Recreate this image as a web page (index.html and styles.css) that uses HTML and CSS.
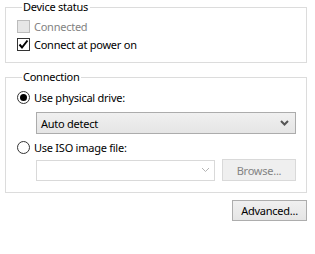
FILE: index.html
```html
<!DOCTYPE html>
<html lang="en">
<head>
    <meta charset="UTF-8">
    <meta name="viewport" content="width=device-width, initial-scale=1.0">
    <title>CD/DVD settings</title>
    <link rel="stylesheet" href="styles.css">
</head>
<body>
    <div class="settings">
        <fieldset class="group group-status">
            <legend>Device status</legend>
            <div class="option disabled">
                <span class="check"></span>
                <span class="label">Connected</span>
            </div>
            <div class="option">
                <span class="check checked">
                    <svg width="11" height="11" viewBox="0 0 11 11"><path d="M1.5 5.5 L4 8.5 L9.5 1.5" fill="none" stroke="#000" stroke-width="2"/></svg>
                </span>
                <span class="label">Connect at power on</span>
            </div>
        </fieldset>

        <fieldset class="group group-connection">
            <legend>Connection</legend>
            <div class="option">
                <span class="radio selected"></span>
                <span class="label">Use physical drive:</span>
            </div>
            <div class="select">
                <span>Auto detect</span>
                <svg width="9" height="6" viewBox="0 0 9 6"><path d="M1 1 L4.5 4.5 L8 1" fill="none" stroke="#555" stroke-width="2"/></svg>
            </div>
            <div class="option option-iso">
                <span class="radio"></span>
                <span class="label">Use ISO image file:</span>
            </div>
            <div class="file-row">
                <div class="combo">
                    <svg width="9" height="6" viewBox="0 0 9 6"><path d="M1 1 L4.5 4.5 L8 1" fill="none" stroke="#b4b4b4" stroke-width="1"/></svg>
                </div>
                <button class="btn" disabled>Browse...</button>
            </div>
        </fieldset>

        <div class="actions">
            <button class="btn">Advanced...</button>
        </div>
    </div>
</body>
</html>
```

FILE: styles.css
```css
* {
    margin: 0;
    padding: 0;
    box-sizing: border-box;
}

body {
    font-family: 'Noto Sans', 'Segoe UI', Tahoma, sans-serif;
    font-size: 11px;
    letter-spacing: -0.25px;
    color: #000;
    background: #fff;
}

.settings {
    width: 315px;
    padding: 1px 8px 0 5px;
}

.group {
    border: 1px solid #dcdcdc;
    padding: 4px 0 9px 11px;
}

.group legend {
    margin-left: 5px;
    padding: 0 2px 0 1px;
    line-height: 12px;
}

.group-connection {
    margin-top: 8px;
    padding-top: 5px;
    padding-bottom: 11px;
}

.option {
    display: flex;
    align-items: center;
    height: 18px;
}

.option .label {
    margin-left: 4px;
}

.option.disabled .label {
    color: #838383;
}

.check {
    width: 13px;
    height: 13px;
    border: 1px solid #333;
    background: #fff;
    display: flex;
    align-items: center;
    justify-content: center;
}

.option.disabled .check {
    border-color: #bcbcbc;
    background: #e6e6e6;
}

.radio {
    width: 13px;
    height: 13px;
    border: 1px solid #333;
    border-radius: 50%;
    background: #fff;
    display: flex;
    align-items: center;
    justify-content: center;
}

.radio.selected::after {
    content: '';
    width: 7px;
    height: 7px;
    border-radius: 50%;
    background: #000;
}

.select {
    margin: 6px 10px 0 19px;
    height: 22px;
    border: 1px solid #acacac;
    background: linear-gradient(#f0f0f0, #e5e5e5);
    display: flex;
    align-items: center;
    justify-content: space-between;
    padding: 0 6px 0 4px;
}

.option-iso {
    margin-top: 4px;
}

.file-row {
    margin: 3px 10px 0 19px;
    display: flex;
    align-items: center;
    gap: 7px;
}

.combo {
    flex: 1;
    height: 21px;
    border: 1px solid #d9d9d9;
    background: #fff;
    display: flex;
    align-items: center;
    justify-content: flex-end;
    padding-right: 4px;
}

.btn {
    font: inherit;
    letter-spacing: inherit;
    width: 74px;
    height: 22px;
    border: 1px solid #adadad;
    background: linear-gradient(#f0f0f0, #e5e5e5);
    color: #000;
}

.btn:disabled {
    border-color: #d9d9d9;
    background: #efefef;
    color: #838383;
}

.actions {
    display: flex;
    justify-content: flex-end;
    margin-top: 7px;
}

.actions .btn {
    width: 75px;
    height: 21px;
}
```
